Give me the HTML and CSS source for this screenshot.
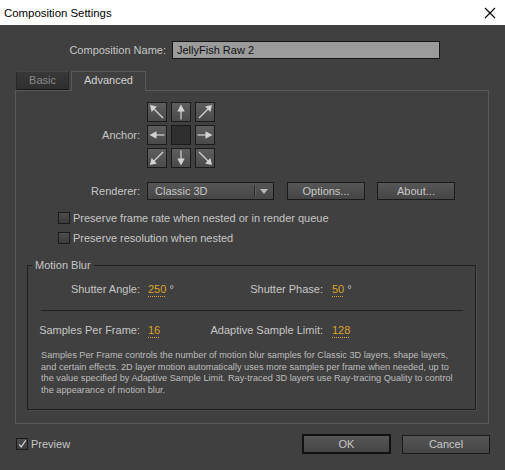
FILE: index.html
```html
<!DOCTYPE html>
<html>
<head>
<meta charset="utf-8">
<title>Composition Settings</title>
<link rel="stylesheet" href="styles.css">
</head>
<body>
<div class="window">
  <header class="titlebar">
    <span class="title">Composition Settings</span>
    <svg class="close" width="12" height="12" viewBox="0 0 12 12"><path d="M1 1L11 11M11 1L1 11" stroke="#000" stroke-width="1.1" fill="none"/></svg>
  </header>
  <main class="content">
    <div class="name-row">
      <span class="name-label">Composition Name:</span>
      <div class="name-input">JellyFish Raw 2</div>
    </div>
    <div class="tabs">
      <div class="tab">Basic</div>
      <div class="tab active">Advanced</div>
    </div>
    <section class="panel">
      <div class="form-row">
        <span class="label">Anchor:</span>
        <div class="anchor-grid">
          <div class="abtn"><svg viewBox="0 0 18 18"><g class="arrow diag"><path d="M15 15L6 6"/><polygon points="2,2 8.9,3.6 3.6,8.9"/></g></svg></div>
          <div class="abtn"><svg viewBox="0 0 18 18"><g class="arrow"><path d="M9 16.5V7"/><polygon points="9,1.5 5.3,8.5 12.7,8.5"/></g></svg></div>
          <div class="abtn"><svg viewBox="0 0 18 18"><g class="arrow" transform="rotate(90 9 9)"><path d="M15 15L6 6"/><polygon points="2,2 8.9,3.6 3.6,8.9"/></g></svg></div>
          <div class="abtn"><svg viewBox="0 0 18 18"><g class="arrow" transform="rotate(-90 9 9)"><path d="M9 16.5V7"/><polygon points="9,1.5 5.3,8.5 12.7,8.5"/></g></svg></div>
          <div class="abtn center"></div>
          <div class="abtn"><svg viewBox="0 0 18 18"><g class="arrow" transform="rotate(90 9 9)"><path d="M9 16.5V7"/><polygon points="9,1.5 5.3,8.5 12.7,8.5"/></g></svg></div>
          <div class="abtn"><svg viewBox="0 0 18 18"><g class="arrow" transform="rotate(-90 9 9)"><path d="M15 15L6 6"/><polygon points="2,2 8.9,3.6 3.6,8.9"/></g></svg></div>
          <div class="abtn"><svg viewBox="0 0 18 18"><g class="arrow" transform="rotate(180 9 9)"><path d="M9 16.5V7"/><polygon points="9,1.5 5.3,8.5 12.7,8.5"/></g></svg></div>
          <div class="abtn"><svg viewBox="0 0 18 18"><g class="arrow" transform="rotate(180 9 9)"><path d="M15 15L6 6"/><polygon points="2,2 8.9,3.6 3.6,8.9"/></g></svg></div>
        </div>
      </div>
      <div class="form-row renderer-row">
        <span class="label">Renderer:</span>
        <div class="controls">
          <div class="select">
            <span class="sel-text">Classic 3D</span>
            <span class="sel-sep"></span>
            <svg class="sel-arrow" width="8" height="5" viewBox="0 0 8 5"><polygon points="0,0 8,0 4,5" fill="#b8b8b8"/></svg>
          </div>
          <button class="btn options">Options...</button>
          <button class="btn about">About...</button>
        </div>
      </div>
      <div class="checks">
        <div class="check-row"><span class="box"></span><span>Preserve frame rate when nested or in render queue</span></div>
        <div class="check-row"><span class="box"></span><span>Preserve resolution when nested</span></div>
      </div>
      <fieldset class="group">
        <legend>Motion Blur</legend>
        <div class="group-body">
          <div class="params">
            <span class="plabel">Shutter Angle:</span>
            <span class="pval first"><span class="num">250</span> °</span>
            <span class="plabel">Shutter Phase:</span>
            <span class="pval second"><span class="num">50</span> °</span>
          </div>
          <hr class="sep">
          <div class="params second-row">
            <span class="plabel">Samples Per Frame:</span>
            <span class="pval first"><span class="num">16</span></span>
            <span class="plabel">Adaptive Sample Limit:</span>
            <span class="pval second"><span class="num">128</span></span>
          </div>
          <p class="desc">Samples Per Frame controls the number of motion blur samples for Classic 3D layers, shape layers,<br>and certain effects. 2D layer motion automatically uses more samples per frame when needed, up to<br>the value specified by Adaptive Sample Limit. Ray-traced 3D layers use Ray-tracing Quality to control<br>the appearance of motion blur.</p>
        </div>
      </fieldset>
    </section>
    <footer class="footer">
      <div class="check-row preview">
        <span class="box checked"><svg width="12" height="12" viewBox="0 0 12 12"><path d="M2.5 6.5L5 9.5L10.5 1.5" stroke="#d0d0d0" stroke-width="1.4" fill="none"/></svg></span>
        <span>Preview</span>
      </div>
      <button class="btn ok">OK</button>
      <button class="btn cancel">Cancel</button>
    </footer>
  </main>
</div>
</body>
</html>
```

FILE: styles.css
```css
* { box-sizing: border-box; }
html, body { margin: 0; padding: 0; }
body {
  width: 505px;
  height: 470px;
  overflow: hidden;
  background: #404040;
  font-family: "Liberation Sans", Arial, sans-serif;
}
.window {
  width: 505px;
  height: 470px;
  display: flex;
  flex-direction: column;
}
.titlebar {
  flex: none;
  height: 25px;
  background: #ffffff;
  display: flex;
  align-items: center;
  justify-content: space-between;
  padding: 0 9px 0 4px;
}
.title { font-size: 11.4px; color: #000; }
.content {
  flex: 1;
  background: #404040;
  color: #c6c6c6;
  font-size: 11px;
}
.name-row {
  display: flex;
  align-items: center;
  height: 18px;
  margin-top: 16px;
}
.name-label { width: 166px; text-align: right; }
.name-input {
  margin-left: 6px;
  width: 268px;
  height: 18px;
  background: #9b9b9b;
  border: 1px solid #161616;
  color: #111;
  padding-left: 4px;
  line-height: 16px;
  font-size: 11px;
}
.tabs {
  display: flex;
  align-items: flex-start;
  gap: 2px;
  height: 19px;
  margin: 12px 0 0 16px;
}
.tab {
  width: 53px;
  height: 19px;
  line-height: 17px;
  text-align: center;
  color: #8a8a8a;
  background: linear-gradient(#383838, #2f2f2f);
  border: 1px solid #2a2a2a;
  border-top-color: #474747;
  border-bottom-color: #161616;
}
.tab.active {
  width: 75px;
  height: 20px;
  color: #d2d2d2;
  background: #404040;
  border: 1px solid #5a5a5a;
  border-bottom: none;
  position: relative;
  z-index: 1;
}
.panel {
  margin-left: 15px;
  width: 474px;
  border: 1px solid #5a5a5a;
  padding: 11px 0 13px 0;
}
.form-row {
  display: grid;
  grid-template-columns: 124px auto;
  column-gap: 7px;
  align-items: center;
}
.label { text-align: right; }
.anchor-grid {
  display: grid;
  grid-template-columns: repeat(3, 20px);
  grid-auto-rows: 20px;
  column-gap: 4px;
  row-gap: 3px;
}
.abtn {
  width: 20px;
  height: 20px;
  border: 1px solid #1c1c1c;
  background: linear-gradient(#5e5e5e, #4a4a4a);
}
.abtn svg { display: block; width: 18px; height: 18px; }
.abtn.center { background: #2f2f2f; border-color: #1a1a1a; }
.arrow path { stroke: #d4d4d4; stroke-width: 1.2; fill: none; }
.arrow polygon { fill: #d4d4d4; }
.renderer-row { margin-top: 14px; height: 18px; }
.controls { display: flex; align-items: center; }
.select {
  width: 127px;
  height: 18px;
  border: 1px solid #1a1a1a;
  background: linear-gradient(#555555, #474747);
  display: flex;
  align-items: center;
  color: #c8c8c8;
}
.sel-text { flex: 1; padding-left: 7px; }
.sel-sep {
  width: 1px;
  height: 12px;
  background: #2a2a2a;
  box-shadow: 1px 0 0 #5e5e5e;
}
.sel-arrow { margin: 0 5px 0 5px; }
.btn {
  font-family: inherit;
  font-size: 11px;
  color: #c8c8c8;
  height: 18px;
  width: 78px;
  padding: 0;
  border: 1px solid #1a1a1a;
  background: linear-gradient(#565656, #454545);
}
.btn.options { margin-left: 13px; }
.btn.about { margin-left: 12px; }
.checks { margin-top: 8px; padding-left: 42px; }
.check-row {
  display: flex;
  align-items: center;
  gap: 3px;
  height: 20px;
}
.box {
  width: 12px;
  height: 12px;
  border: 1px solid #1b1b1b;
  background: linear-gradient(#4c4c4c, #3c3c3c);
  flex: none;
  display: flex;
  align-items: center;
  justify-content: center;
}
.box svg { display: block; }
.group {
  margin: 10px 12px 0 11px;
  padding: 0;
  min-width: 0;
  border: 1px solid #1f1f1f;
  box-shadow: 1px 1px 0 #4c4c4c;
}
.group legend {
  margin-left: 4px;
  padding: 0 3px;
  line-height: 14px;
  font-size: 11px;
  color: #c6c6c6;
}
.group-body { padding: 8px 12px 13px 13px; }
.params {
  display: grid;
  grid-template-columns: 99px 57px 126px auto;
  align-items: center;
  height: 18px;
}
.second-row { margin-top: 10px; }
.plabel {
  display: flex;
  justify-content: flex-end;
  white-space: nowrap;
}
.pval { white-space: nowrap; }
.pval.first { padding-left: 8px; }
.pval.second { padding-left: 9px; }
.num {
  color: #dca22a;
  text-decoration: underline dotted #dca22a;
  text-underline-offset: 3px;
}
.sep {
  border: none;
  height: 1px;
  background: #1f1f1f;
  margin: 12px 0 0 0;
}
.desc {
  margin: 11px 0 0 0;
  font-size: 9.2px;
  line-height: 11.5px;
  color: #bdbdbd;
  white-space: nowrap;
}
.footer {
  display: flex;
  align-items: center;
  height: 20px;
  margin-top: 10px;
  padding: 0 15px 0 16px;
}
.btn.ok {
  margin-left: auto;
  width: 89px;
  height: 20px;
  border: 2px solid #111;
}
.btn.cancel {
  margin-left: 11px;
  width: 88px;
  height: 19px;
}
```
